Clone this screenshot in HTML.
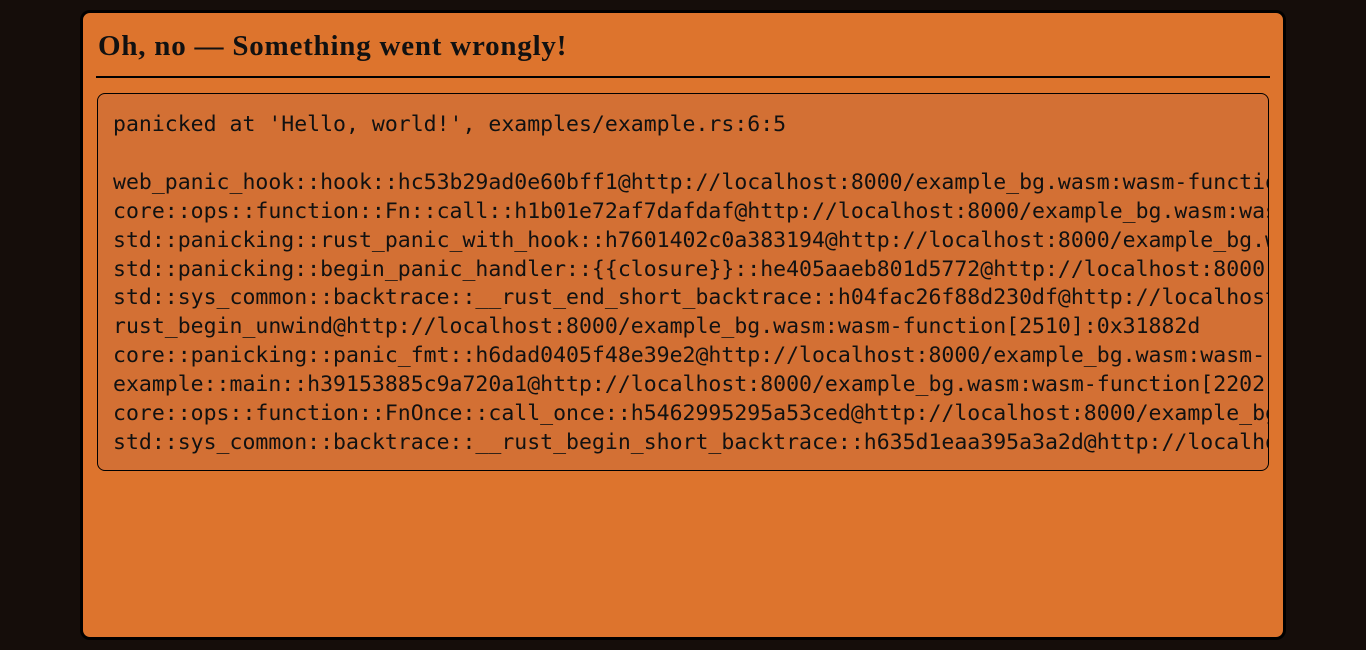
<!DOCTYPE html>
<html><head><style>
html,body{margin:0;padding:0;background:#150d0a;width:1366px;height:650px;overflow:hidden}
.card{position:absolute;left:80px;top:10px;width:1200px;height:624px;background:#dd742d;border:3px solid #000;border-radius:10px}
h1{position:absolute;left:15px;top:17px;margin:0;font:bold 29px "Liberation Serif",serif;color:#111;white-space:nowrap;letter-spacing:0.78px}
.hr{position:absolute;left:13px;top:63px;width:1174px;height:2px;background:#000}
pre{position:absolute;left:14px;top:80px;width:1172px;height:378px;margin:0;background:#d37034;border:1px solid #000;border-radius:8px;overflow:hidden;box-sizing:border-box;padding:17px 0 0 15px;font:21.5px/28.9px "DejaVu Sans Mono",monospace;color:#111;white-space:pre}
</style></head><body>
<div class="card">
<h1>Oh, no — Something went wrongly!</h1>
<div class="hr"></div>
<pre>panicked at 'Hello, world!', examples/example.rs:6:5

web_panic_hook::hook::hc53b29ad0e60bff1@http://localhost:8000/example_bg.wasm:wasm-function
core::ops::function::Fn::call::h1b01e72af7dafdaf@http://localhost:8000/example_bg.wasm:wasm
std::panicking::rust_panic_with_hook::h7601402c0a383194@http://localhost:8000/example_bg.wasm
std::panicking::begin_panic_handler::{{closure}}::he405aaeb801d5772@http://localhost:8000
std::sys_common::backtrace::__rust_end_short_backtrace::h04fac26f88d230df@http://localhost
rust_begin_unwind@http://localhost:8000/example_bg.wasm:wasm-function[2510]:0x31882d
core::panicking::panic_fmt::h6dad0405f48e39e2@http://localhost:8000/example_bg.wasm:wasm-
example::main::h39153885c9a720a1@http://localhost:8000/example_bg.wasm:wasm-function[2202
core::ops::function::FnOnce::call_once::h5462995295a53ced@http://localhost:8000/example_bg
std::sys_common::backtrace::__rust_begin_short_backtrace::h635d1eaa395a3a2d@http://localhost</pre>
</div>
</body></html>
